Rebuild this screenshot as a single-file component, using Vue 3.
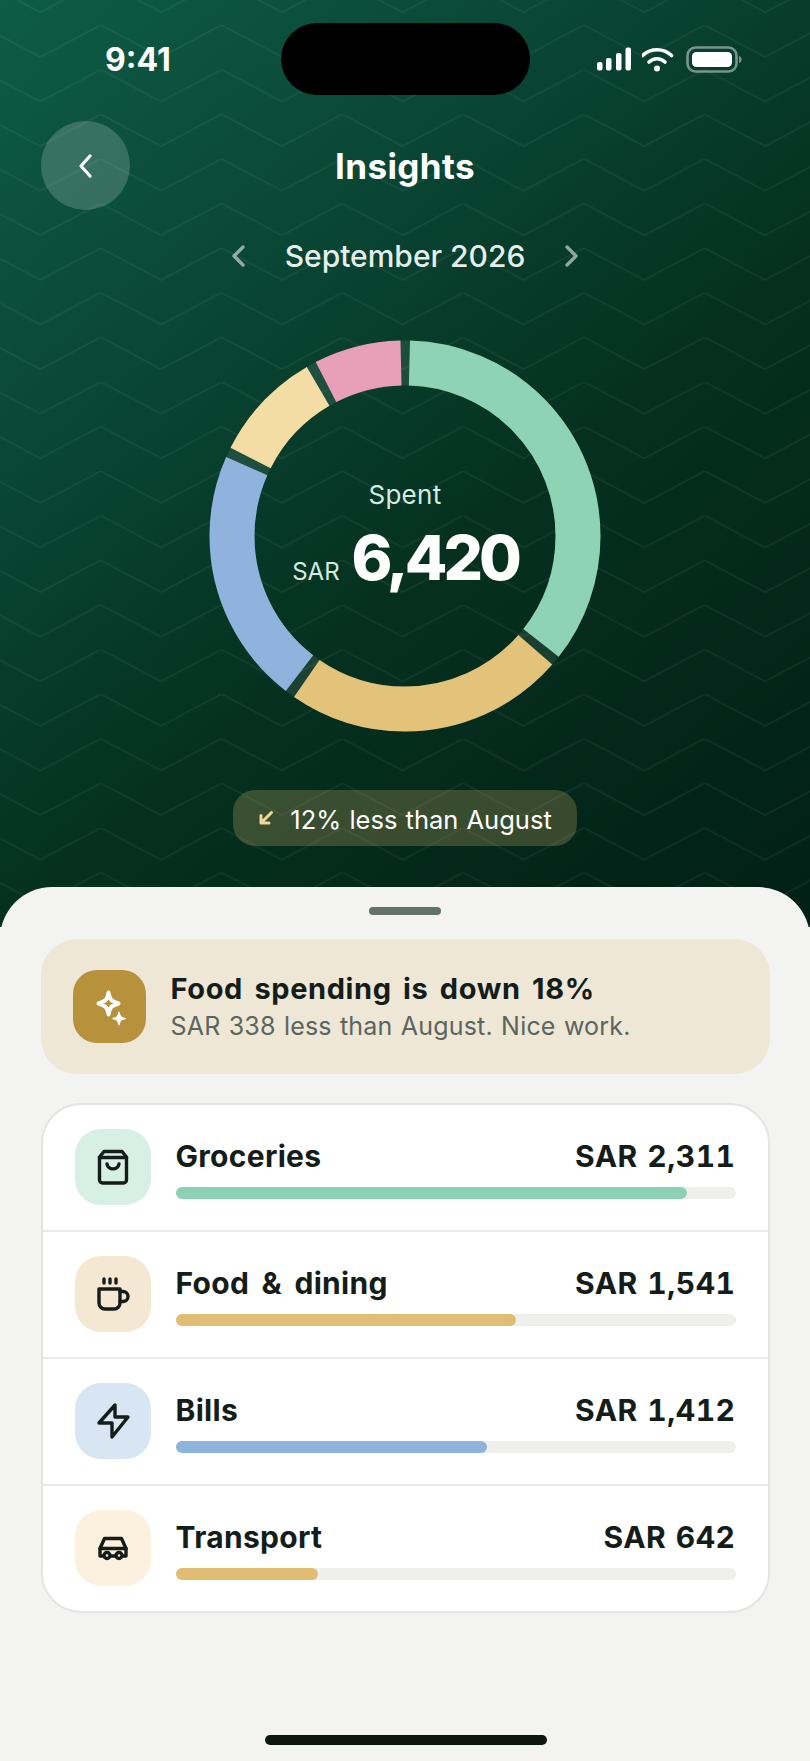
<script setup>
const radius = 173
const circumference = 2 * Math.PI * radius
const gap = 9

const slices = [
  { pct: 36, color: '#8fd3b6' },
  { pct: 24, color: '#e3c27a' },
  { pct: 22, color: '#8fb3dc' },
  { pct: 10, color: '#f3dda4' },
  { pct: 8, color: '#e8a0b8' },
]

let used = 0
const segments = slices.map((s) => {
  const len = (s.pct / 100) * circumference
  const seg = {
    color: s.color,
    dash: `${len - gap} ${circumference - len + gap}`,
    offset: -(used + gap / 2),
  }
  used += len
  return seg
})

const categories = [
  { name: 'Groceries', amount: 'SAR 2,311', pct: 91.3, color: '#8cd1b3', bg: '#d8efe6', icon: 'bag' },
  { name: 'Food & dining', amount: 'SAR 1,541', pct: 60.8, color: '#e0bd72', bg: '#f5e8d2', icon: 'cup' },
  { name: 'Bills', amount: 'SAR 1,412', pct: 55.7, color: '#8fb3dc', bg: '#d8e5f2', icon: 'bolt' },
  { name: 'Transport', amount: 'SAR 642', pct: 25.5, color: '#e0bd72', bg: '#fbf1de', icon: 'car' },
]
</script>

<template>
  <div class="screen">
    <section class="hero">
      <svg class="chevrons" width="810" height="927">
        <defs>
          <pattern id="zig" x="40.3" y="25" width="120.8" height="44.6" patternUnits="userSpaceOnUse">
            <path d="M0 32 L60.4 0 L120.8 32" fill="none" stroke="#fff" stroke-opacity="0.06" stroke-width="1.6" />
            <path d="M0 -12.6 L60.4 -44.6 L120.8 -12.6" fill="none" stroke="#fff" stroke-opacity="0.06" stroke-width="1.6" />
          </pattern>
        </defs>
        <rect width="810" height="927" fill="url(#zig)" />
      </svg>

      <div class="status">
        <span class="time">9:41</span>
        <div class="island"></div>
        <div class="status-icons">
          <svg width="36" height="24" viewBox="0 0 36 24" fill="#fff">
            <rect x="1" y="15" width="5.5" height="8.5" rx="2" />
            <rect x="10" y="11" width="5.5" height="12.5" rx="2" />
            <rect x="20" y="6" width="5.5" height="17.5" rx="2" />
            <rect x="29.5" y="0.5" width="5.5" height="23" rx="2" />
          </svg>
          <svg width="34" height="25" viewBox="2 0 34 25" fill="none" stroke="#fff" stroke-width="3.6" stroke-linecap="round">
            <path d="M2.500 8.500C10.500 .8 23.500 .8 31.500 8.500" />
            <path d="M9 15C13.500 10.600 20.500 10.600 25 15" />
            <circle cx="17" cy="21.500" r="3" fill="#fff" stroke="none" />
          </svg>
          <svg width="56" height="27" viewBox="0 0 56 27" fill="none">
            <rect x="1.500" y="1.500" width="49" height="24" rx="8" stroke="#fff" stroke-opacity="0.45" stroke-width="2.600" />
            <rect x="6" y="6" width="40" height="15" rx="4.500" fill="#fff" />
            <path d="M53 10c1.800.6 2.600 2 2.600 3.500S54.800 16.400 53 17z" fill="#fff" fill-opacity="0.45" />
          </svg>
        </div>
      </div>

      <header class="nav">
        <button class="back">
          <svg width="20" height="26" viewBox="0 0 20 26" fill="none" stroke="#fff" stroke-width="3.2" stroke-linecap="round" stroke-linejoin="round">
            <path d="M14 3 L5 13 L14 23" />
          </svg>
        </button>
        <h1 class="title">Insights</h1>
      </header>

      <div class="month">
        <svg width="16" height="24" viewBox="0 0 16 24" fill="none" stroke="#fff" stroke-opacity="0.55" stroke-width="3.4" stroke-linecap="round" stroke-linejoin="round">
          <path d="M13 3 L4 12 L13 21" />
        </svg>
        <span>September 2026</span>
        <svg width="16" height="24" viewBox="0 0 16 24" fill="none" stroke="#fff" stroke-opacity="0.55" stroke-width="3.4" stroke-linecap="round" stroke-linejoin="round">
          <path d="M3 3 L12 12 L3 21" />
        </svg>
      </div>

      <div class="donut">
        <svg width="392" height="392" viewBox="0 0 392 392">
          <g transform="rotate(-90 196 196)" fill="none" stroke-width="45">
            <circle cx="196" cy="196" :r="radius" stroke="#fff" stroke-opacity="0.09" />
            <circle
              v-for="(seg, i) in segments"
              :key="i"
              cx="196"
              cy="196"
              :r="radius"
              :stroke="seg.color"
              :stroke-dasharray="seg.dash"
              :stroke-dashoffset="seg.offset"
            />
          </g>
        </svg>
        <div class="donut-text">
          <div class="spent">Spent</div>
          <div class="total"><span class="cur">SAR</span><span class="num">6,420</span></div>
        </div>
      </div>

      <div class="pill">
        <svg width="16" height="16" viewBox="0 0 16 16" fill="none" stroke="#f0d795" stroke-width="3" stroke-linecap="round" stroke-linejoin="round">
          <path d="M13.500 2.500 L3 13 M3 5.500 V13 H11" />
        </svg>
        <span>12% less than August</span>
      </div>
    </section>

    <section class="sheet">
      <div class="handle"></div>

      <div class="tip">
        <div class="tip-icon">
          <svg width="40" height="44" viewBox="0 0 40 44" fill="#fff">
            <path d="M19.500 7.500 C20.500 14.500 22.500 16.500 29.500 18.500 C22.500 20.500 20.500 22.500 19.500 29.500 C18.500 22.500 16.500 20.500 9.500 18.500 C16.500 16.500 18.500 14.500 19.500 7.500Z" fill="none" stroke="#fff" stroke-width="4" stroke-linejoin="round" />
            <path d="M30 27.500 C30.700 31.500 32 32.800 36 33.500 C32 34.200 30.700 35.500 30 39.500 C29.300 35.500 28 34.200 24 33.500 C28 32.800 29.300 31.500 30 27.500Z" stroke="#fff" stroke-width="1.500" stroke-linejoin="round" />
          </svg>
        </div>
        <div class="tip-text">
          <div class="tip-title">Food spending is down 18%</div>
          <div class="tip-sub">SAR 338 less than August. Nice work.</div>
        </div>
      </div>

      <div class="list">
        <div v-for="cat in categories" :key="cat.name" class="row">
          <div class="row-icon" :style="{ background: cat.bg }">
            <svg width="36" height="38" viewBox="0 0 36 38" fill="none" stroke="#141d1a" stroke-width="3.4" stroke-linecap="round" stroke-linejoin="round">
              <template v-if="cat.icon === 'bag'">
                <path d="M9 3.500H27L31.500 9V32A3 3 0 0 1 28.500 35H7.500A3 3 0 0 1 4.500 32V9Z" />
                <path d="M4.500 9.500H31.500" />
                <path d="M12 16C13 22.500 23 22.500 24 16" />
              </template>
              <template v-else-if="cat.icon === 'cup'">
                <path d="M4 14H25V28A6 6 0 0 1 19 34H10A6 6 0 0 1 4 28Z" />
                <path d="M25 16.500H28A5 5 0 0 1 28 26.500H25" />
                <path d="M9 4V8M15 4V8M21 4V8" />
              </template>
              <template v-else-if="cat.icon === 'bolt'">
                <path d="M20 3L4 21H17V35L33 15H20Z" />
              </template>
              <template v-else>
                <path d="M9.500 9.500H26.500L31 19.500V27H5V19.500Z" />
                <path d="M5 19.500H31" />
                <circle cx="12" cy="26.500" r="3" :fill="cat.bg" />
                <circle cx="24" cy="26.500" r="3" :fill="cat.bg" />
              </template>
            </svg>
          </div>
          <div class="row-body">
            <div class="row-top">
              <span class="row-name">{{ cat.name }}</span>
              <span class="row-amount">{{ cat.amount }}</span>
            </div>
            <div class="track">
              <div class="fill" :style="{ width: cat.pct + '%', background: cat.color }"></div>
            </div>
          </div>
        </div>
      </div>

      <div class="home-bar"></div>
    </section>
  </div>
</template>

<style>
html,
body {
  margin: 0;
  background: #f3f3f1;
}
</style>

<style scoped>
.screen {
  width: 810px;
  height: 1761px;
  overflow: hidden;
  display: flex;
  flex-direction: column;
  font-family: "Inter", "Noto Sans", sans-serif;
  background: #f3f3f1;
  color: #141d1a;
}

.hero {
  position: relative;
  height: 927px;
  flex-shrink: 0;
  background: linear-gradient(140deg, #0e5c45 0%, #0a4836 28%, #05301f 58%, #021f16 100%);
  color: #fff;
  display: flex;
  flex-direction: column;
  align-items: center;
}

.chevrons {
  position: absolute;
  inset: 0;
}

.status {
  position: relative;
  width: 100%;
  height: 72px;
  margin-top: 23px;
  display: flex;
  justify-content: space-between;
  align-items: center;
  padding: 0 68px 0 105px;
  box-sizing: border-box;
}

.time {
  font-size: 32px;
  font-weight: 700;
}

.island {
  position: absolute;
  left: 281px;
  top: 0;
  width: 249px;
  height: 72px;
  border-radius: 36px;
  background: #000;
}

.status-icons {
  display: flex;
  align-items: center;
  gap: 10px;
}

.nav {
  position: relative;
  width: 100%;
  height: 89px;
  margin-top: 26px;
  display: flex;
  justify-content: center;
  align-items: center;
}

.back {
  position: absolute;
  left: 41px;
  top: 0;
  width: 89px;
  height: 89px;
  border: none;
  border-radius: 50%;
  background: rgba(255, 255, 255, 0.18);
  display: flex;
  align-items: center;
  justify-content: center;
  padding: 0;
}

.title {
  margin: 0;
  font-size: 35px;
  font-weight: 650;
  letter-spacing: 0.4px;
}

.month {
  position: relative;
  display: flex;
  align-items: center;
  gap: 39px;
  margin-top: 24px;
  height: 44px;
  font-size: 30px;
  font-weight: 500;
  color: rgba(255, 255, 255, 0.92);
}

.donut {
  position: relative;
  width: 392px;
  height: 392px;
  margin-top: 62px;
}

.donut-text {
  position: absolute;
  inset: 0;
  padding-top: 10px;
  box-sizing: border-box;
  display: flex;
  flex-direction: column;
  align-items: center;
  justify-content: center;
}

.spent {
  font-size: 26px;
  letter-spacing: 0.3px;
  color: #d5ebe0;
  margin-top: -10px;
}

.total {
  display: flex;
  align-items: baseline;
  gap: 12px;
  margin-top: 14px;
}

.cur {
  font-size: 24px;
  color: #d5ebe0;
}

.num {
  font-size: 62px;
  font-weight: 800;
  letter-spacing: -4px;
  line-height: 1.1;
}

.pill {
  position: relative;
  margin-top: 58px;
  width: 344px;
  height: 56px;
  border-radius: 22px;
  background: rgba(224, 189, 114, 0.24);
  display: flex;
  align-items: center;
  justify-content: center;
  gap: 16px;
  font-size: 25.5px;
  word-spacing: 1px;
}

.pill span {
  padding-top: 2px;
}

.sheet {
  position: relative;
  flex: 1;
  margin-top: -40px;
  border-radius: 52px 52px 0 0;
  background: #f3f3f1;
  display: flex;
  flex-direction: column;
  align-items: center;
}

.handle {
  width: 72px;
  height: 8px;
  margin-top: 20px;
  border-radius: 4px;
  background: #64716c;
}

.tip {
  width: 729px;
  height: 135px;
  margin-top: 24px;
  padding: 0 32px;
  box-sizing: border-box;
  border-radius: 36px;
  background: #efe7d5;
  display: flex;
  align-items: center;
  gap: 25px;
}

.tip-icon {
  width: 73px;
  height: 73px;
  border-radius: 24px;
  background: #b8913c;
  display: flex;
  align-items: center;
  justify-content: center;
}

.tip-title {
  font-size: 29px;
  font-weight: 650;
  line-height: 38px;
  letter-spacing: 0.6px;
  word-spacing: 4px;
}

.tip-sub {
  font-size: 25px;
  line-height: 36px;
  letter-spacing: 0.2px;
  word-spacing: 1px;
  color: #5a655f;
}

.list {
  width: 729px;
  margin-top: 29px;
  box-sizing: border-box;
  background: #fff;
  border: 2px solid #e4e4e2;
  border-radius: 40px;
  overflow: hidden;
}

.row {
  height: 127px;
  box-sizing: border-box;
  padding: 24px 32px 0 32px;
  display: flex;
  gap: 25px;
  border-bottom: 2px solid #e9e9e7;
}

.row:last-child {
  border-bottom: none;
  height: 125px;
}

.row-icon {
  width: 76px;
  height: 76px;
  flex-shrink: 0;
  border-radius: 26px;
  display: flex;
  align-items: center;
  justify-content: center;
}

.row-body {
  flex: 1;
}

.row-top {
  display: flex;
  justify-content: space-between;
  align-items: center;
  height: 54px;
  font-size: 30px;
  font-weight: 650;
}

.row-name {
  letter-spacing: 0.3px;
  word-spacing: 5px;
}

.row-amount {
  letter-spacing: 0.5px;
  word-spacing: 1px;
  font-variant-numeric: tabular-nums;
}

.track {
  height: 12px;
  border-radius: 6px;
  background: #efefed;
  margin-top: 4px;
}

.fill {
  height: 100%;
  border-radius: 6px;
}

.home-bar {
  position: absolute;
  left: 265px;
  bottom: 16px;
  width: 282px;
  height: 10px;
  border-radius: 5px;
  background: #0d1512;
}
</style>
